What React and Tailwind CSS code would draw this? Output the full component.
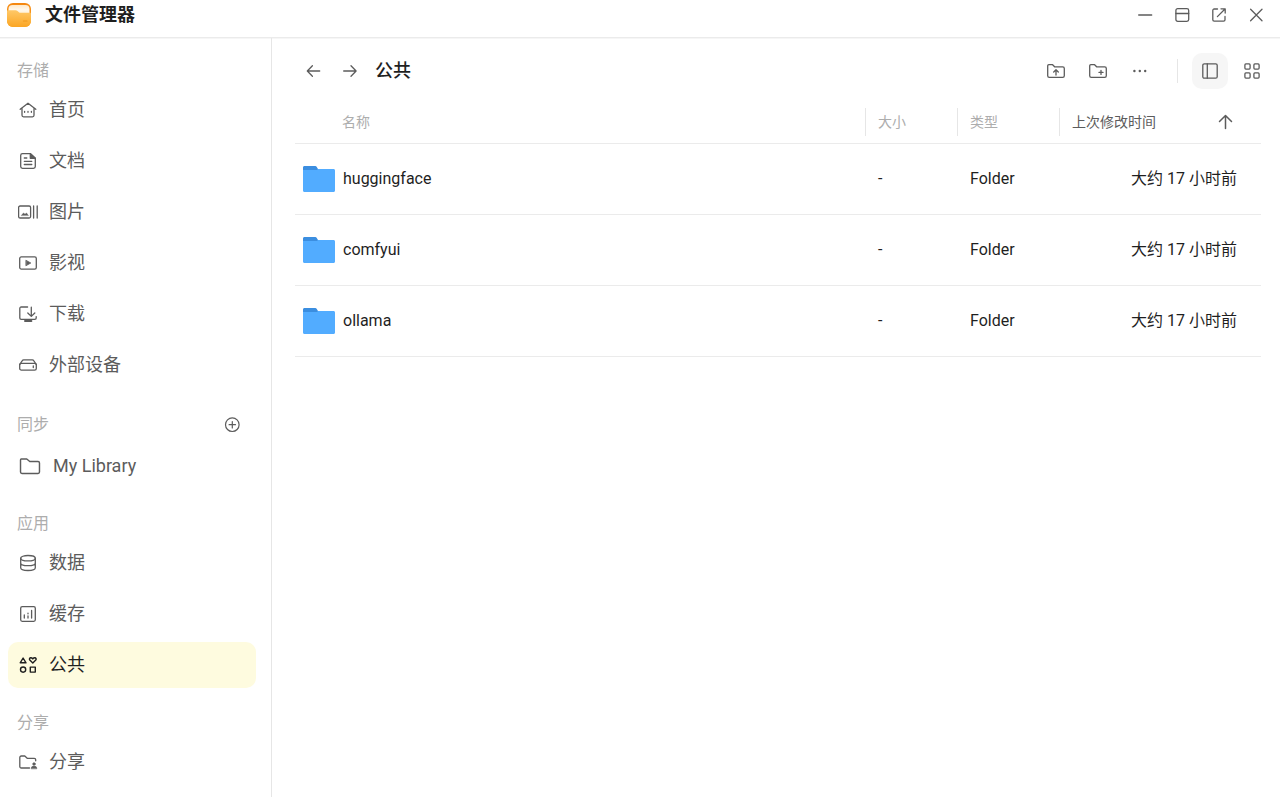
import React, { useState } from 'react'

const Icon = ({ size = 20, className = '', strokeWidth = 1.3, children }) => (
  <svg
    width={size}
    height={size}
    viewBox="0 0 20 20"
    fill="none"
    stroke="currentColor"
    strokeWidth={strokeWidth}
    strokeLinecap="round"
    strokeLinejoin="round"
    className={`shrink-0 ${className}`}
    aria-hidden="true"
  >
    {children}
  </svg>
)

const AppLogo = () => (
  <svg width="24" height="24" viewBox="0 0 24 24" className="shrink-0" aria-hidden="true">
    <defs>
      <linearGradient id="logoBack" x1="0" y1="0" x2="0" y2="1">
        <stop offset="0" stopColor="#f5860f" />
        <stop offset="1" stopColor="#fbab2c" />
      </linearGradient>
      <linearGradient id="logoPaper" x1="0" y1="0" x2="0" y2="1">
        <stop offset="0" stopColor="#ffe9c9" />
        <stop offset="0.3" stopColor="#fff8ec" />
        <stop offset="1" stopColor="#ffe3b0" />
      </linearGradient>
      <linearGradient id="logoFront" x1="0" y1="0" x2="0" y2="1">
        <stop offset="0" stopColor="#ffc867" />
        <stop offset="1" stopColor="#fba624" />
      </linearGradient>
    </defs>
    <rect width="24" height="24" rx="6" fill="url(#logoBack)" />
    <rect x="1.5" y="2" width="21" height="16" rx="4" fill="url(#logoPaper)" />
    <path
      d="M0 8.5c0-.7.5-1.200 1.200-1.200h7.300c.8 0 1.400.3 2 .8l1.400 1.100c.5.4 1.100.6 1.800.6h9.100c.7 0 1.200.5 1.200 1.200V18a6 6 0 0 1-6 6H6a6 6 0 0 1-6-6z"
      fill="url(#logoFront)"
    />
    <path d="M16.500 18h3.500" stroke="#f0981a" strokeWidth="1.200" strokeLinecap="round" />
  </svg>
)

const FolderImage = () => (
  <svg width="32" height="26" viewBox="0 0 32 26" className="shrink-0" aria-hidden="true">
    <path d="M0 1.500C0 .6.6 0 1.500 0h10.800c.6 0 1 .2 1.300.7L15 3v6H0z" fill="#3b8ee0" />
    <path d="M0 4h14l1-1h15.500c.9 0 1.500.6 1.500 1.500v20c0 .9-.6 1.500-1.500 1.500h-29C.6 26 0 25.400 0 24.500z" fill="#52acff" />
  </svg>
)

const icons = {
  home: (
    <Icon>
      <path d="M2.200 9.300 10 3.200l7.800 6.100M4 8v7.300c0 .9.600 1.500 1.500 1.500h9c.9 0 1.500-.6 1.500-1.500V8" />
      <path d="M6.600 11.300v1M10 11.300v1M13.400 11.300v1" />
    </Icon>
  ),
  document: (
    <Icon>
      <path d="M4.500 2.700h8l4.800 4.600v8.200c0 1-.8 1.800-1.800 1.800h-11c-1 0-1.800-.8-1.800-1.800v-11c0-1 .8-1.800 1.800-1.800z" />
      <path d="M12.300 2.700v4.600h5z" fill="currentColor" />
      <path d="M6.300 7h2.500M6.300 10.300h7.500M6.300 13.500h7.500" />
    </Icon>
  ),
  picture: (
    <Icon>
      <rect x=".6" y="4" width="12" height="12" rx="1.500" />
      <path d="m3.500 13.300 2-2.300 1.500 1.300 1.500-1.300 1.700 2.300z" fill="currentColor" strokeWidth=".5" />
      <path d="M15.600 4v12M19.200 4v12" />
    </Icon>
  ),
  video: (
    <Icon>
      <rect x="1.700" y="3.900" width="16.600" height="12.200" rx="1.600" />
      <path d="m8.200 7.400 4.600 2.600-4.600 2.600z" fill="currentColor" strokeWidth=".8" />
    </Icon>
  ),
  download: (
    <Icon>
      <path d="M9.600 3H3.200c-.8 0-1.400.6-1.400 1.400V14c0 .8.600 1.400 1.400 1.400h13.600c.8 0 1.400-.6 1.400-1.400v-1.400M13.300 3.200v9M9.800 9l3.500 3.400L16.800 9" />
      <path d="M7 17h6.400" strokeWidth="2" />
    </Icon>
  ),
  drive: (
    <Icon>
      <path d="M1.700 9.500 4.300 5.600c.3-.5.800-.7 1.300-.7h8.800c.5 0 1 .2 1.300.7l2.600 3.900" />
      <rect x="1.700" y="8.300" width="16.600" height="6.800" rx="1.700" />
      <path d="M15.300 11v1.500" />
    </Icon>
  ),
  data: (
    <Icon>
      <ellipse cx="10" cy="5.200" rx="7.300" ry="2.700" />
      <path d="M2.700 5.200v9.600c0 1.500 3.300 2.700 7.300 2.700s7.300-1.200 7.300-2.700V5.200M2.700 10c0 1.500 3.300 2.700 7.300 2.700s7.300-1.200 7.300-2.700" />
    </Icon>
  ),
  cache: (
    <Icon>
      <rect x="2.700" y="2.700" width="14.600" height="14.600" rx="1.500" />
      <path d="M6.300 11v3M10 9.200v.6M10 12v2M13.600 6.500V14" />
    </Icon>
  ),
  shapes: (
    <Icon strokeWidth={1.400}>
      <path d="M5.100 3 8 7.800H2.200z" />
      <path d="m14.800 8-3-2.900c-.8-.9-.2-2.300 1-2.300.8 0 1.500.4 2 1.100.5-.7 1.200-1.100 2-1.100 1.200 0 1.800 1.400 1 2.300z" />
      <circle cx="5.100" cy="14.600" r="2.600" />
      <rect x="12.300" y="12.100" width="5" height="5" />
    </Icon>
  ),
  share: (
    <Icon>
      <path d="M11.500 16H3.300c-.9 0-1.500-.6-1.500-1.500v-9c0-.9.600-1.500 1.500-1.500h3.500l2.400 2.300h7c.9 0 1.500.6 1.500 1.500v1" />
      <circle cx="16" cy="12" r="1.300" fill="currentColor" strokeWidth=".6" />
      <path d="M13.200 16.400c0-1.500 1.100-2.300 2.800-2.300s2.800.8 2.800 2.300z" fill="currentColor" strokeWidth=".6" />
    </Icon>
  ),
  library: (
    <Icon size={24} strokeWidth={1.200}>
      <path d="M2.700 4.200h4.600l2.500 2.100h6.900c.7 0 1.200.5 1.200 1.200V15c0 .7-.5 1.200-1.200 1.200H3.300c-.7 0-1.200-.5-1.200-1.200V4.900c0-.4.200-.7.600-.7z" />
    </Icon>
  ),
}

const sections = [
  {
    title: '存储',
    items: [
      { id: 'home', label: '首页', icon: icons.home },
      { id: 'documents', label: '文档', icon: icons.document },
      { id: 'pictures', label: '图片', icon: icons.picture },
      { id: 'movies', label: '影视', icon: icons.video },
      { id: 'downloads', label: '下载', icon: icons.download },
      { id: 'external', label: '外部设备', icon: icons.drive },
    ],
  },
  {
    title: '同步',
    canAdd: true,
    items: [{ id: 'library', label: 'My Library', icon: icons.library }],
  },
  {
    title: '应用',
    items: [
      { id: 'data', label: '数据', icon: icons.data },
      { id: 'cache', label: '缓存', icon: icons.cache },
      { id: 'common', label: '公共', icon: icons.shapes },
    ],
  },
  {
    title: '分享',
    items: [{ id: 'share', label: '分享', icon: icons.share }],
  },
]

const files = [
  { name: 'huggingface', size: '-', type: 'Folder', modified: '大约 17 小时前' },
  { name: 'comfyui', size: '-', type: 'Folder', modified: '大约 17 小时前' },
  { name: 'ollama', size: '-', type: 'Folder', modified: '大约 17 小时前' },
]

const TitleBar = () => (
  <header className="flex h-[38px] items-center justify-between border-b border-[#ebebeb] pb-2 pl-[7px] pr-3.5 shadow-[0_1px_0_#f6f6f6]">
    <div className="flex items-center gap-3.5">
      <AppLogo />
      <h1 className="text-[18px] leading-6 font-bold text-[#1f1f1f]">文件管理器</h1>
    </div>
    <div className="flex items-center gap-[17px] text-[#5c5c5c]">
      <button type="button" aria-label="最小化">
        <Icon><path d="M3.700 10h13" /></Icon>
      </button>
      <button type="button" aria-label="最大化">
        <Icon>
          <rect x="3.900" y="3.700" width="12.800" height="12.600" rx="1.800" />
          <path d="M3.900 8.500h12.800" />
        </Icon>
      </button>
      <button type="button" aria-label="在新窗口打开">
        <Icon>
          <path d="M8.500 4H5.200C4.400 4 3.800 4.600 3.800 5.400v9.400c0 .8.600 1.400 1.400 1.400h9.400c.8 0 1.400-.6 1.400-1.400v-3.300M12 3.800h4.200V8M16 4l-7.600 7.600" />
        </Icon>
      </button>
      <button type="button" aria-label="关闭">
        <Icon><path d="m4.600 4.300 11.400 11.400M16 4.300 4.600 15.700" /></Icon>
      </button>
    </div>
  </header>
)

const Sidebar = ({ active, onSelect }) => (
  <aside className="flex w-[272px] shrink-0 flex-col gap-[22px] border-r border-[#e6e6e6] pt-5 pr-[15px] pb-3 pl-2">
    {sections.map((section) => (
      <nav key={section.title} aria-label={section.title} className="flex flex-col gap-[5px]">
        <div className={`flex items-center justify-between pt-0.5 pr-3.5 pl-[9px] ${section.canAdd ? 'h-7' : 'h-6'}`}>
          <h2 className="text-base text-[#adadad]">{section.title}</h2>
          {section.canAdd && (
            <button type="button" aria-label="添加" className="text-[#5c5c5c]">
              <Icon strokeWidth={1.200}>
                <circle cx="10.300" cy="9.700" r="6.800" />
                <path d="M10.300 6.500v6.400M7.100 9.700h6.400" />
              </Icon>
            </button>
          )}
        </div>
        {section.items.map((item) => (
          <button
            key={item.id}
            type="button"
            onClick={() => onSelect(item.id)}
            className={`flex h-[46px] w-full items-center gap-[11px] rounded-[10px] px-2.5 text-left text-[18px] leading-6 ${
              active === item.id ? 'bg-[#fefbdf] text-[#1f1f1f]' : 'text-[#5c5c5c]'
            }`}
          >
            {item.icon}
            {item.label}
          </button>
        ))}
      </nav>
    ))}
  </aside>
)

const Toolbar = ({ view, onView }) => (
  <div className="flex h-9 items-center justify-between pl-2 text-[#5c5c5c]">
    <div className="flex items-center gap-4">
      <button type="button" aria-label="后退">
        <Icon><path d="M16.700 10H4.500M9.400 4.800 4.300 10l5.100 5.200" /></Icon>
      </button>
      <button type="button" aria-label="前进">
        <Icon><path d="M4.700 10h12.200M12 4.800l5.100 5.200-5.100 5.200" /></Icon>
      </button>
      <h2 className="text-[18px] leading-6 font-medium text-[#1f1f1f]">公共</h2>
    </div>
    <div className="flex items-center">
      <div className="flex items-center gap-[22px]">
        <button type="button" aria-label="上传">
          <Icon>
            <path d="M1.700 4.800c0-.6.500-1.100 1.100-1.100h3.800l2 2.100h8.100c.9 0 1.600.7 1.600 1.600v7.300c0 .9-.7 1.600-1.600 1.600H3.300c-.9 0-1.600-.7-1.600-1.600zM10 14V9M7.700 11 10 8.800l2.300 2.200" />
          </Icon>
        </button>
        <button type="button" aria-label="新建文件夹">
          <Icon>
            <path d="M1.700 4.800c0-.6.500-1.100 1.100-1.100h3.800l2 2.100h8.100c.9 0 1.600.7 1.600 1.600v7.300c0 .9-.7 1.600-1.600 1.600H3.300c-.9 0-1.600-.7-1.600-1.600zM13 9.400v4M11 11.400h4" />
          </Icon>
        </button>
        <button type="button" aria-label="更多">
          <Icon>
            <g fill="currentColor" stroke="none">
              <circle cx="4.400" cy="10" r="1.200" />
              <circle cx="9.800" cy="10" r="1.200" />
              <circle cx="15.200" cy="10" r="1.200" />
            </g>
          </Icon>
        </button>
      </div>
      <div className="mr-3.5 ml-[27px] h-6 w-px bg-[#e6e6e6]" />
      <button
        type="button"
        aria-label="列表视图"
        onClick={() => onView('list')}
        className={`flex size-9 items-center justify-center rounded-[10px] ${view === 'list' ? 'bg-[#f6f6f6]' : ''}`}
      >
        <Icon>
          <rect x="2.800" y="2.800" width="14.400" height="14.400" rx="1.500" />
          <path d="M7.300 2.800v14.400" />
        </Icon>
      </button>
      <button
        type="button"
        aria-label="网格视图"
        onClick={() => onView('grid')}
        className={`-mr-px ml-3.5 rounded-[10px] ${view === 'grid' ? 'bg-[#f6f6f6]' : ''}`}
      >
        <Icon>
          <rect x="2.900" y="2.900" width="5.200" height="5.200" rx="1" />
          <rect x="11.900" y="2.900" width="5.200" height="5.200" rx="1" />
          <rect x="2.900" y="11.900" width="5.200" height="5.200" rx="1" />
          <rect x="11.900" y="11.900" width="5.200" height="5.200" rx="1" />
        </Icon>
      </button>
    </div>
  </div>
)

const FileTable = () => (
  <table className="mt-[11px] w-full table-fixed border-separate border-spacing-0 text-left">
    <thead className="text-sm text-[#adadad]">
      <tr className="h-11">
        <th className="border-b border-[#ebebeb] pl-[47px] font-normal">名称</th>
        <th className="w-[92px] border-b border-[#ebebeb] font-normal">
          <div className="flex h-7 items-center border-l border-[#e6e6e6] pl-3">大小</div>
        </th>
        <th className="w-[102px] border-b border-[#ebebeb] font-normal">
          <div className="flex h-7 items-center border-l border-[#e6e6e6] pl-3">类型</div>
        </th>
        <th className="w-[202px] border-b border-[#ebebeb] font-normal">
          <div className="flex h-7 items-center justify-between border-l border-[#e6e6e6] pr-[26px] pl-3 text-[#5c5c5c]">
            上次修改时间
            <Icon strokeWidth={1.500}><path d="M10.500 16.500v-13M4.500 9.500l6-6 6 6" /></Icon>
          </div>
        </th>
      </tr>
    </thead>
    <tbody className="text-base text-[#1f1f1f]">
      {files.map((file) => (
        <tr key={file.name} className="h-[71px]">
          <td className="border-b border-[#ebebeb] pl-2">
            <div className="flex items-center gap-2">
              <FolderImage />
              {file.name}
            </div>
          </td>
          <td className="border-b border-[#ebebeb] pl-[13px]">{file.size}</td>
          <td className="border-b border-[#ebebeb] pl-[13px]">{file.type}</td>
          <td className="border-b border-[#ebebeb] pr-6 text-right">{file.modified}</td>
        </tr>
      ))}
    </tbody>
  </table>
)

const App = () => {
  const [active, setActive] = useState('common')
  const [view, setView] = useState('list')

  return (
    <div className="flex min-h-screen flex-col bg-white font-[Roboto,'Noto_Sans_CJK_SC',sans-serif]">
      <TitleBar />
      <div className="flex flex-1">
        <Sidebar active={active} onSelect={setActive} />
        <main className="min-w-0 flex-1 pt-[15px] pr-[19px] pl-[23px]">
          <Toolbar view={view} onView={setView} />
          <FileTable />
        </main>
      </div>
    </div>
  )
}

export default App
